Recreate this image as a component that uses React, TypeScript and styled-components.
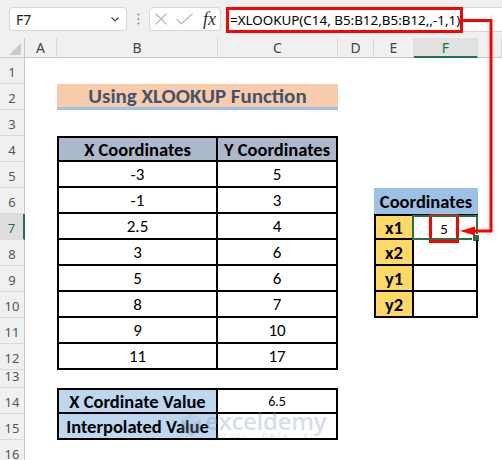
import React from 'react';
import styled, { createGlobalStyle } from 'styled-components';

const COLS = ['A', 'B', 'C', 'D', 'E', 'F', 'G'];
const ROWS = [26, 26, 26, 26, 26, 26, 26, 26, 26, 26, 26, 26, 18, 26, 26, 26];

const colIndex = (c: string) => COLS.indexOf(c) + 2;

const GlobalStyle = createGlobalStyle`
  * { box-sizing: border-box; }
  html, body { margin: 0; padding: 0; background: #fff; }
  body { font-family: "Noto Sans", "Open Sans", sans-serif; }
`;

const Window = styled.div`
  position: relative;
  width: 502px;
  height: 460px;
  overflow: hidden;
  background: #f0f0f0;
`;

const FormulaRow = styled.div`
  display: flex;
  align-items: flex-start;
  height: 38px;
  padding: 7px 0 0 9px;
`;

const NameBox = styled.div`
  display: flex;
  align-items: center;
  justify-content: space-between;
  width: 118px;
  height: 24px;
  padding: 0 7px 0 6px;
  background: #fff;
  border: 1px solid #d6d6d6;
  border-radius: 4px;
  font-size: 14px;
  color: #222;
`;

const Grip = styled.div`
  display: flex;
  align-items: center;
  justify-content: center;
  width: 22px;
  height: 24px;
`;

const ButtonGroup = styled.div`
  display: flex;
  align-items: center;
  gap: 9px;
  width: 72px;
  height: 24px;
  padding: 0 0 0 5px;
  background: #fff;
  border: 1px solid #d6d6d6;
  border-radius: 4px;
`;

const Fx = styled.span`
  font-family: "Liberation Serif", serif;
  font-style: italic;
  font-size: 18px;
  color: #333;
  line-height: 1;
  margin-left: 1px;
`;

const FormulaBox = styled.div`
  flex: 1;
  display: flex;
  align-items: center;
  height: 25px;
  margin-left: 5px;
  background: #fff;
  border: 1px solid #d6d6d6;
  border-right: none;
  border-radius: 4px 0 0 4px;
`;

const FormulaText = styled.div`
  display: flex;
  align-items: center;
  width: 237px;
  height: 26px;
  margin: 0 0 0 -1px;
  padding: 0 0 0 1px;
  border: 3px solid #ff0000;
  font-size: 13.4px;
  color: #000;
  white-space: nowrap;
  overflow: hidden;
`;

const Sheet = styled.div`
  display: grid;
  grid-template-columns: 25px 32px 161px 120px 36px 40px 64px 1fr;
  grid-template-rows: 20px ${ROWS.map(r => `${r}px`).join(' ')};
  background: #fff;
`;

const Corner = styled.div`
  grid-column: 1;
  grid-row: 1;
  display: flex;
  align-items: flex-end;
  justify-content: flex-end;
  padding: 0 3px 2px 0;
  background: #f0f0f0;
  border-right: 1px solid #c8c8c8;
  border-bottom: 1px solid #c8c8c8;
`;

const ColHead = styled.div<{ $active?: boolean }>`
  grid-row: 1;
  display: flex;
  align-items: center;
  justify-content: center;
  font-size: 14px;
  color: ${p => (p.$active ? '#217346' : '#444')};
  background: ${p => (p.$active ? '#e1e1e1' : '#f0f0f0')};
  border-right: 1px solid #d9d9d9;
  border-bottom: ${p => (p.$active ? '2px solid #217346' : '1px solid #c8c8c8')};
`;

const RowHead = styled.div<{ $active?: boolean }>`
  grid-column: 1;
  display: flex;
  align-items: flex-end;
  justify-content: center;
  padding-bottom: 2px;
  font-size: 13px;
  color: ${p => (p.$active ? '#217346' : '#555')};
  background: ${p => (p.$active ? '#dedede' : '#f0f0f0')};
  border-right: ${p => (p.$active ? '2px solid #217346' : '1px solid #c8c8c8')};
  border-bottom: 1px solid #dadada;
`;

type CellProps = {
  $col: string;
  $row: number;
  $span?: number;
  $fill?: string;
  $bold?: boolean;
  $size?: number;
  $boxed?: boolean;
  $top?: boolean;
  $left?: boolean;
};

const Cell = styled.div<CellProps>`
  position: relative;
  grid-column: ${p => colIndex(p.$col)} / span ${p => p.$span ?? 1};
  grid-row: ${p => p.$row + 1};
  display: flex;
  align-items: center;
  justify-content: center;
  padding-top: 1px;
  white-space: nowrap;
  font-family: "Carlito", "Lato", sans-serif;
  font-size: ${p => p.$size ?? 17}px;
  font-weight: ${p => (p.$bold ? 700 : 400)};
  color: #000;
  background: ${p => p.$fill ?? 'transparent'};
  border-right: ${p => (p.$boxed ? '2px solid #000' : 'none')};
  border-bottom: ${p => (p.$boxed ? '2px solid #000' : 'none')};
  border-top: ${p => (p.$top ? '2px solid #000' : 'none')};
  border-left: ${p => (p.$left ? '2px solid #000' : 'none')};
`;

const Title = styled(Cell)`
  color: #44546a;
  border-bottom: 3px solid #9bc2e6;
`;

const Selection = styled.div`
  position: absolute;
  top: -1px;
  left: -2px;
  right: -2px;
  bottom: -2px;
  border: 2px solid #217346;
  pointer-events: none;

  &::after {
    content: '';
    position: absolute;
    right: -4px;
    bottom: -4px;
    width: 6px;
    height: 6px;
    background: #217346;
    border: 1px solid #fff;
  }
`;

const Marker = styled.div`
  position: absolute;
  top: -2px;
  left: 15px;
  width: 30px;
  height: 29px;
  display: flex;
  align-items: center;
  justify-content: center;
  border: 3px solid #ff0000;
  font-size: 15px;
  padding-top: 1px;
`;

const Callout = styled.svg`
  position: absolute;
  left: 0;
  top: 0;
  pointer-events: none;
`;

const Watermark = styled.div`
  position: absolute;
  left: 180px;
  top: 410px;
  display: flex;
  align-items: center;
  gap: 3px;
  opacity: 0.3;
  pointer-events: none;
`;

const MarkText = styled.div`
  display: flex;
  flex-direction: column;
  align-items: center;
  line-height: 1;
  color: #7a93b8;
`;

const MarkName = styled.span`
  font-family: "Open Sans", sans-serif;
  font-size: 24px;
  font-weight: 600;
  line-height: 22px;
  letter-spacing: -0.3px;
`;

const MarkTag = styled.span`
  font-family: "Open Sans", sans-serif;
  font-size: 7px;
  letter-spacing: 2.6px;
  line-height: 8px;
`;

const tableRows: [string, string][] = [
  ['-3', '5'],
  ['-1', '3'],
  ['2.5', '4'],
  ['3', '6'],
  ['5', '6'],
  ['8', '7'],
  ['9', '10'],
  ['11', '17'],
];

const coordLabels = ['x1', 'x2', 'y1', 'y2'];

export default function App() {
  return (
    <Window>
      <GlobalStyle />
      <FormulaRow>
        <NameBox>
          <span>F7</span>
          <svg width="8" height="5" viewBox="0 0 8 5">
            <path d="M0.5 0.5 L4 4 L7.5 0.5" fill="none" stroke="#444" strokeWidth="1.1" />
          </svg>
        </NameBox>
        <Grip>
          <svg width="3" height="12" viewBox="0 0 3 12">
            <circle cx="1.5" cy="1.5" r="1" fill="#8a8a8a" />
            <circle cx="1.5" cy="6" r="1" fill="#8a8a8a" />
            <circle cx="1.5" cy="10.5" r="1" fill="#8a8a8a" />
          </svg>
        </Grip>
        <ButtonGroup>
          <svg width="12" height="12" viewBox="0 0 12 12">
            <path d="M0.5 0.5 L11.5 11.5 M11.5 0.5 L0.5 11.5" stroke="#b8b8b8" strokeWidth="1.2" />
          </svg>
          <svg width="17" height="12" viewBox="0 0 17 12">
            <path d="M0.5 6 L5.5 11 L16.5 0.5" fill="none" stroke="#b8b8b8" strokeWidth="1.2" />
          </svg>
          <Fx>fx</Fx>
        </ButtonGroup>
        <FormulaBox>
          <FormulaText>=XLOOKUP(C14, B5:B12,B5:B12,,-1,1)</FormulaText>
        </FormulaBox>
      </FormulaRow>

      <Sheet>
        <Corner>
          <svg width="12" height="12" viewBox="0 0 12 12">
            <path d="M12 0 L12 12 L0 12 Z" fill="#c9c9c9" />
          </svg>
        </Corner>
        {COLS.map(c => (
          <ColHead key={c} $active={c === 'F'} style={{ gridColumn: colIndex(c) }}>
            {c === 'G' ? '' : c}
          </ColHead>
        ))}
        {ROWS.map((_, i) => (
          <RowHead key={i} $active={i + 1 === 7} style={{ gridRow: i + 2 }}>
            {i + 1}
          </RowHead>
        ))}

        <Title $col="B" $row={2} $span={2} $fill="#f8cbad" $bold $size={21}>
          Using XLOOKUP Function
        </Title>

        <Cell $col="B" $row={4} $fill="#acb9ca" $bold $size={18.5} $boxed $top $left>
          X Coordinates
        </Cell>
        <Cell $col="C" $row={4} $fill="#acb9ca" $bold $size={18.5} $boxed $top>
          Y Coordinates
        </Cell>
        {tableRows.map(([x, y], i) => (
          <React.Fragment key={i}>
            <Cell $col="B" $row={5 + i} $boxed $left>
              {x}
            </Cell>
            <Cell $col="C" $row={5 + i} $boxed>
              {y}
            </Cell>
          </React.Fragment>
        ))}

        <Cell $col="E" $row={6} $span={2} $fill="#9bc2e6" $bold $size={18.5}>
          Coordinates
        </Cell>
        {coordLabels.map((label, i) => (
          <React.Fragment key={label}>
            <Cell $col="E" $row={7 + i} $fill="#ffd966" $bold $size={18.5} $boxed $left $top={i === 0}>
              {label}
            </Cell>
            <Cell $col="F" $row={7 + i} $boxed $top={i === 0}>
              {i === 0 && (
                <>
                  <Marker>5</Marker>
                  <Selection />
                </>
              )}
            </Cell>
          </React.Fragment>
        ))}

        <Cell $col="B" $row={14} $fill="#bdd7ee" $bold $size={18.5} $boxed $top $left>
          X Cordinate Value
        </Cell>
        <Cell $col="C" $row={14} $size={14} $boxed $top>
          6.5
        </Cell>
        <Cell $col="B" $row={15} $fill="#bdd7ee" $bold $size={18.5} $boxed $left>
          Interpolated Value
        </Cell>
        <Cell $col="C" $row={15} $boxed />
      </Sheet>

      <Watermark>
        <svg width="22" height="24" viewBox="0 0 30 34">
          <path d="M15 1 L29 9 L29 25 L15 33 L1 25 L1 9 Z" fill="#7a93b8" />
          <path d="M15 1 L29 9 L15 17 L1 9 Z" fill="#a9bbd6" />
        </svg>
        <MarkText>
          <MarkName>exceldemy</MarkName>
          <MarkTag>EXCEL · DATA · BI</MarkTag>
        </MarkText>
      </Watermark>

      <Callout width="502" height="460" viewBox="0 0 502 460">
        <path d="M463 20.5 L491 20.5 L491 231 L472 231" fill="none" stroke="#ff0000" strokeWidth="3" />
        <path d="M460 231 L475 226.5 L475 235.5 Z" fill="#ff0000" />
      </Callout>
    </Window>
  );
}
